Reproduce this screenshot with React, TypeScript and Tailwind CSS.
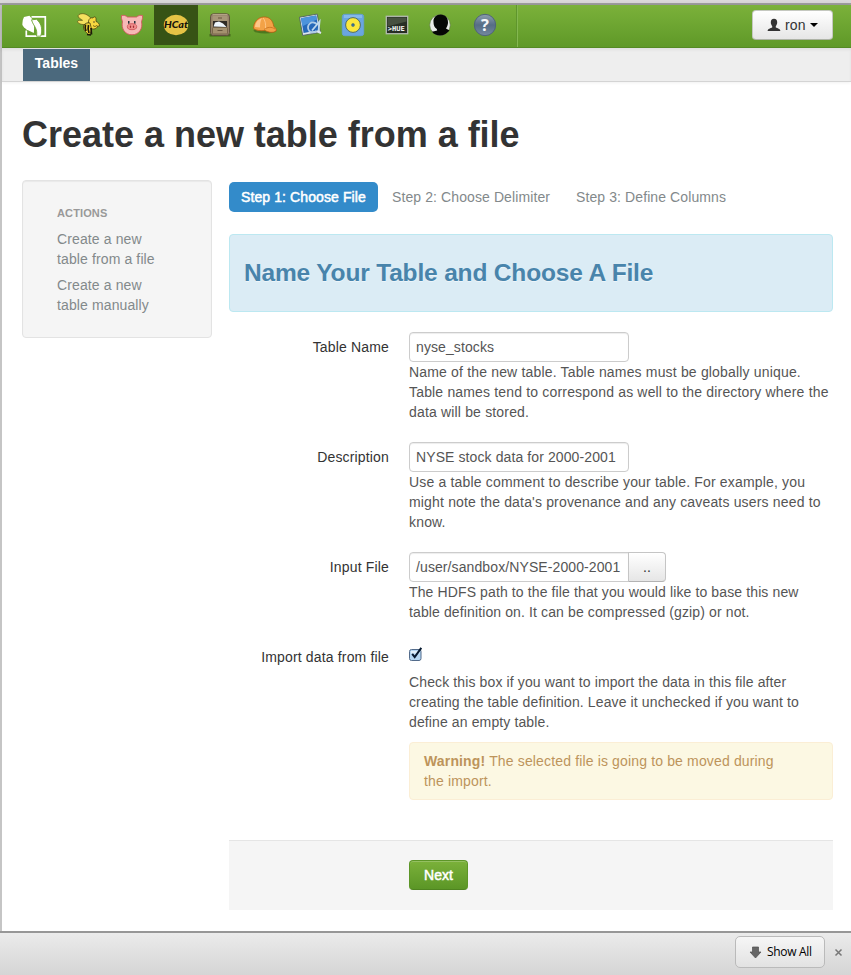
import React from "react";

function HueLogo() {
  return (
    <svg width="26" height="26" viewBox="0 0 26 26">
      <path d="M9.500 3.800h13.800v19.400H4.300V17.500" fill="none" stroke="#fff" strokeWidth="1.700" />
      <path d="M.8 7 2 4 7.500 2.800 10.500 6.500c1.500 3 2 7 1.300 13.500L4.500 16.500C2.500 15 1 13.500.3 11.500z" fill="#fff" />
      <path d="M9.500 6.800l5-.5c2.500 2 4.500 5 5 8.500.4 3 .2 5.500-.8 8.400h-4.200c.6-3 .3-6-1.200-8.700-1-2-2.800-4.200-3.800-7.700z" fill="#fff" stroke="#6da533" strokeWidth=".9" />
    </svg>
  );
}

function BeeIcon() {
  return (
    <svg width="26" height="26" viewBox="0 0 26 26">
      <path d="M11 12.500c-4 .5-8.500-1-8.500-3 .5-1.500 3-1 5-1.200C5 6.800 1.500 4.500 4 2.500 8 .5 13 2 17 7.500z" fill="#f6e05e" stroke="#5d5215" strokeWidth=".7" />
      <path d="M13.500 9c.5-2.500 2.500-3.800 4.500-3 1-1.800 3-1.200 3 .6L21 9.500c2 .5 3.500 2.500 3.500 4 0 1-1 1-1.500.2-.8 2-2 3.300-4.500 3.300-3 0-5.500-3-5-8z" fill="#f7d840" stroke="#3c340c" strokeWidth=".7" />
      <path d="M15 11c-3-.5-6.500.5-6.500 4 0 2.500 1.500 4.500 5.500 8 1.500-2 3-4 2.500-6z" fill="#f4d63a" stroke="#2b2508" strokeWidth=".7" />
      <path d="M10.500 12.500c-.5 2-.5 4 .5 6.500M13.500 13c-.7 2.500-.5 5 .5 8M16 16l.5 6.500M12 22.500l4 .5" stroke="#1d1a0a" strokeWidth="1.700" fill="none" />
      <circle cx="19" cy="10" r=".7" fill="#222" />
      <path d="M18 13.500c1.500 1.500 3 1 4-.3" stroke="#5b4b00" strokeWidth=".8" fill="none" />
    </svg>
  );
}

function PigIcon() {
  return (
    <svg width="24" height="24" viewBox="0 0 24 24">
      <path d="M1.500 2.500c2-.5 4.500 0 6 1.500h9c1.500-1.500 4-2 6-1.500.3 2.200-.2 4.200-1 6 1.700 7-2.500 13.300-9.500 13.300S.8 15.500 2.500 8.500c-.8-1.800-1.300-3.800-1-6z" fill="#f6b9b6" stroke="#d0565a" strokeWidth=".9" />
      <rect x="8" y="8" width="1.500" height="2.700" fill="#26343d" />
      <rect x="14" y="8" width="1.500" height="2.700" fill="#26343d" />
      <ellipse cx="12" cy="13.700" rx="4.700" ry="3" fill="#f08f8c" stroke="#cb5056" strokeWidth=".8" />
      <ellipse cx="10.500" cy="13.700" rx=".7" ry="1.300" fill="#a52f35" />
      <ellipse cx="13.500" cy="13.700" rx=".7" ry="1.300" fill="#a52f35" />
    </svg>
  );
}

function HCatIcon() {
  return (
    <svg width="28" height="24" viewBox="0 0 28 24">
      <ellipse cx="14" cy="12" rx="12.200" ry="10.200" fill="#e5c345" />
      <text x="14" y="15.200" textAnchor="middle" textLength="24" lengthAdjust="spacingAndGlyphs" fontFamily="Lato, sans-serif" fontSize="9.800" fontWeight="900" fontStyle="italic" fill="#15130a">HCat</text>
    </svg>
  );
}

function CabinetIcon() {
  return (
    <svg width="24" height="26" viewBox="0 0 24 26">
      <path d="M1.500 22h21v2.500h-21z" fill="#2d4512" opacity=".6" />
      <rect x="2.500" y="1.800" width="19" height="21.700" rx="3" fill="#95836a" stroke="#5d4e3b" strokeWidth=".9" />
      <path d="M4.500 2.700h15" stroke="#bfae91" />
      <rect x="4.500" y="4" width="15" height="6" rx="1" fill="#a79678" />
      <path d="M5 9h14v6.500H5z" fill="#302b26" />
      <path d="M5.500 14.500 7 10.500l4-1 4 2 3.500 3.500z" fill="#eef5fb" />
      <rect x="4.500" y="15.500" width="15" height="6.500" rx="1" fill="#a4916f" stroke="#6b583e" strokeWidth=".7" />
      <path d="M9.500 18.500h5M10 6h4" stroke="#66553d" strokeWidth="1" />
    </svg>
  );
}

function HelmetIcon() {
  return (
    <svg width="28" height="22" viewBox="0 0 28 22">
      <ellipse cx="14" cy="16.500" rx="11.500" ry="3" fill="#355414" opacity=".55" />
      <path d="M2.500 14.500c0-5.500 3.500-11 10-11.500 6-.5 9.500 3.500 10.300 9.500 1.700 1 2.700 2.500 2.300 4.500-3.200 2.300-7.800 1.300-11.100-.5-4 .5-9 .2-11.500-2z" fill="#f3a247" stroke="#b76011" strokeWidth=".8" />
      <path d="M4 13C4.500 8.500 7 5.500 11 4.300c-1.500 2.200-2 5.200-2 9.200z" fill="#ffc78a" />
      <path d="M12 4c2 2 3 5.500 2.500 11" fill="none" stroke="#ffc78a" strokeWidth=".9" />
      <path d="M13 15.500c3.500-2.500 7.500-3 11-.5" stroke="#cc7420" strokeWidth=".9" fill="none" />
    </svg>
  );
}

function PhotoIcon() {
  return (
    <svg width="26" height="26" viewBox="0 0 26 26">
      <g transform="rotate(-10 13 13)">
        <rect x="4" y="3.500" width="18" height="18.500" fill="#dce5ed" stroke="#4b5b61" strokeWidth=".8" />
        <rect x="5.300" y="4.800" width="15.400" height="15" fill="#2668b9" />
        <path d="M5.300 4.800h15.400v4L5.300 13z" fill="#4c93dc" />
      </g>
      <path d="M20 12.500a5 5 0 1 0-.5 6.500" fill="none" stroke="#aecce8" strokeWidth="1.800" />
      <path d="m15 18.500 7.500-9-1 10" fill="none" stroke="#c0d8ed" strokeWidth="1.800" />
      <path d="m20.500 19.500 3.500 1.500" stroke="#dce7f0" strokeWidth="2" />
    </svg>
  );
}

function DiscIcon() {
  return (
    <svg width="24" height="24" viewBox="0 0 24 24">
      <rect x="1.300" y="1.300" width="21.400" height="21.400" rx="2.500" fill="#6aa5e1" stroke="#65a1cf" />
      <path d="M3 2h18v3H3z" fill="#84b8ec" />
      <circle cx="12" cy="12" r="7.400" fill="#fae73c" stroke="#4f6c66" />
      <circle cx="12" cy="12" r="1.700" fill="#205780" />
      <circle cx="12" cy="12" r=".6" fill="#8bbad6" />
    </svg>
  );
}

function ShellIcon() {
  return (
    <svg width="24" height="20" viewBox="0 0 24 20">
      <rect x="1.300" y="1.300" width="21.400" height="17.400" fill="#272e25" stroke="#b3b9b1" strokeWidth="1.300" />
      <path d="M2.500 2.500h19v4l-19 5z" fill="#465040" />
      <text x="2.800" y="16.300" textLength="17" lengthAdjust="spacingAndGlyphs" fontFamily="DejaVu Sans Mono, monospace" fontWeight="700" fontSize="7" fill="#f6f9f5">&gt;HUE</text>
    </svg>
  );
}

function ProfileIcon() {
  return (
    <svg width="24" height="24" viewBox="0 0 24 24">
      <circle cx="12" cy="12" r="10.300" fill="#e8ebe8" stroke="#60764a" strokeWidth=".6" />
      <path d="M5.500 9C5 4.500 8.500 1.500 12.500 1.500 17.500 1.500 20.300 5 20 10c-.2 2-1 4-2 5.500l3.500 2C19 20.500 15.500 22.500 12 22.500c-3.500 0-6-1.200-8-3.700l5.200-1.300-.4-1.500C6.500 14.500 5.500 12.500 5.500 9z" fill="#050705" />
    </svg>
  );
}

function HelpIcon() {
  return (
    <svg width="24" height="24" viewBox="0 0 24 24">
      <defs>
        <linearGradient id="help-ball" x2="0" y2="1">
          <stop stopColor="#8e9faf" />
          <stop offset=".5" stopColor="#566d85" />
          <stop offset="1" stopColor="#7489a0" />
        </linearGradient>
      </defs>
      <circle cx="12" cy="12" r="10.700" fill="url(#help-ball)" stroke="#4e6377" />
      <text x="12" y="17.600" textAnchor="middle" fontFamily="Open Sans, sans-serif" fontWeight="700" fontSize="16.500" fill="#f6f8fa">?</text>
    </svg>
  );
}

const apps = [
  { Icon: BeeIcon },
  { Icon: PigIcon },
  { Icon: HCatIcon, active: true },
  { Icon: CabinetIcon },
  { Icon: HelmetIcon, shift: "pl-px" },
  { Icon: PhotoIcon, shift: "pl-[3px]" },
  { Icon: DiscIcon, shift: "pl-px" },
  { Icon: ShellIcon, shift: "pl-[2px]" },
  { Icon: ProfileIcon },
  { Icon: HelpIcon, shift: "pl-px" },
];

function Navbar() {
  return (
    <nav className="flex h-[43px] border-b border-[#558c25] bg-linear-to-b from-[#7bb13a] to-[#5f9928] shadow-[0_1px_5px_rgba(0,0,0,0.2)]">
      <div className="flex w-16 items-center pl-5">
        <HueLogo />
      </div>
      {apps.map(({ Icon, active, shift }, i) => (
        <div key={i} className={`flex h-10 w-11 items-center justify-center ${active ? "bg-[#375315]" : ""} ${shift ?? ""}`}>
          <Icon />
        </div>
      ))}
      <div className="ml-[10px] w-0.5 border-r border-[#84b850] border-l border-l-[#5f952c]" />
      <button className="mt-[5px] mr-[18px] ml-auto flex h-[30px] w-[81px] items-center rounded border border-[#c5c8c0] border-b-[#aeb3a6] bg-linear-to-b from-white to-[#e6e6e6] pl-[14px] text-sm text-[#333]">
        <svg width="14" height="14" viewBox="0 0 14 14" className="mr-[4px]">
          <path d="M7 .8c2.200 0 3.300 1.500 3.200 3.700-.1 1.700-.7 2.800-1.400 3.500v1.500c1.500.8 4.400 1.200 4.600 3.500H.6c.2-2.300 3.100-2.700 4.600-3.500V8C4.500 7.300 3.900 6.200 3.800 4.500 3.700 2.300 4.800.8 7 .8z" fill="#333" />
        </svg>
        <span className="leading-5 tracking-[0.2px]">ron</span>
        <span className="ml-1 border-x-4 border-t-4 border-x-transparent border-t-black" />
      </button>
    </nav>
  );
}

function Lines({ items }: { items: string[] }) {
  return (
    <>
      {items.map((line) => (
        <span key={line} className="block whitespace-nowrap">{line}</span>
      ))}
    </>
  );
}

function Field({ label, help, wide = false, children }: { label: string; help: string[]; wide?: boolean; children: React.ReactNode }) {
  return (
    <div className="mb-5 flex">
      <label className="w-40 pt-[5px] text-right tracking-[0.16px] text-[#333]">{label}</label>
      <div className="ml-5 w-[424px]">
        <div className="flex h-[30px]">{children}</div>
        <p className={`text-[#555] ${wide ? "tracking-[0.17px]" : "tracking-[0.12px]"}`}><Lines items={help} /></p>
      </div>
    </div>
  );
}

function TextBox({ value, joined = false }: { value: string; joined?: boolean }) {
  return (
    <div className={`h-[30px] w-[220px] overflow-hidden border border-[#ccc] bg-white px-1.5 py-1 tracking-[0.1px] whitespace-nowrap text-[#555] shadow-[inset_0_1px_1px_rgba(0,0,0,0.075)] ${joined ? "rounded-l" : "rounded"}`}>
      {value}
    </div>
  );
}

export default function App() {
  return (
    <div className="flex h-[975px] w-[851px] flex-col overflow-hidden bg-white font-['Liberation_Sans',Arial,sans-serif] text-sm leading-5">
      <div className="h-[5px] shrink-0 border-b-2 border-[#a09fa0] bg-[#dad8d9]" />
      <div className="h-[926px] border-l-2 border-[#c5c5c5]">
        <Navbar />
        <div className="flex h-[34px] border-b border-[#d4d4d4] bg-[#eee] pl-[21px] shadow-[inset_0_2px_3px_rgba(0,0,0,0.06),0_1px_3px_rgba(0,0,0,0.06)]">
          <div className="mt-px h-8 w-[67px] bg-[#4b697d] pt-1 text-center font-bold text-white">Tables</div>
        </div>
        <main className="px-5 pt-[33px]">
          <h1 className="h-10 text-[36px] leading-10 font-bold tracking-[-0.02px] whitespace-nowrap text-[#333]">Create a new table from a file</h1>
          <div className="mt-[25px] flex gap-[17px]">
            <aside className="h-[158px] w-[190px] shrink-0 rounded border border-[#e3e3e3] bg-[#f5f5f5] pt-[22px] pl-[34px] tracking-[0.12px] text-[#83898b] shadow-[inset_0_1px_1px_rgba(0,0,0,0.05)]">
              <div className="mb-[6px] text-[11px] font-bold text-[#999]">ACTIONS</div>
              <div className="mb-[6px]"><Lines items={["Create a new", "table from a file"]} /></div>
              <div><Lines items={["Create a new", "table manually"]} /></div>
            </aside>
            <div className="w-[604px] shrink-0 pt-0.5">
              <div className="flex h-[30px] gap-0.5 tracking-[0.1px] text-[#83898b]">
                <div className="w-[149px] rounded-[5px] bg-[#338bca] px-3 py-[5px] whitespace-nowrap text-white [-webkit-text-stroke:0.5px_white]">Step 1: Choose File</div>
                <div className="w-[182px] px-3 py-[5px] whitespace-nowrap">Step 2: Choose Delimiter</div>
                <div className="px-3 py-[5px] whitespace-nowrap">Step 3: Define Columns</div>
              </div>
              <div className="mt-[22px] mb-5 h-[78px] rounded border border-[#bce8f1] bg-[#dbecf5] pt-[18px] pl-[14px]">
                <h2 className="text-[24.5px] leading-10 font-bold tracking-[-0.17px] whitespace-nowrap text-[#4884ab] [text-shadow:0_1px_0_rgba(255,255,255,0.5)]">Name Your Table and Choose A File</h2>
              </div>
              <Field wide label="Table Name" help={["Name of the new table. Table names must be globally unique.", "Table names tend to correspond as well to the directory where the", "data will be stored."]}>
                <TextBox value="nyse_stocks" />
              </Field>
              <Field wide label="Description" help={["Use a table comment to describe your table. For example, you", "might note the data's provenance and any caveats users need to", "know."]}>
                <TextBox value="NYSE stock data for 2000-2001" />
              </Field>
              <Field label="Input File" help={["The HDFS path to the file that you would like to base this new", "table definition on. It can be compressed (gzip) or not."]}>
                <TextBox value="/user/sandbox/NYSE-2000-2001" joined />
                <div className="-ml-px h-[30px] w-[38px] rounded-r border border-[#c5c5c5] border-b-[#b3b3b3] bg-linear-to-b from-white to-[#e6e6e6] py-1 text-center text-[#333]">..</div>
              </Field>
              <Field label="Import data from file" help={["Check this box if you want to import the data in this file after", "creating the table definition. Leave it unchecked if you want to", "define an empty table."]}>
                <svg width="16" height="16" viewBox="0 0 16 16" className="mt-1">
                  <rect x=".5" y="3.500" width="11.500" height="11" rx="2" fill="#b4d7f3" stroke="#536b8b" />
                  <path d="M2 5h8.500v2.500H2z" fill="#e1f0fb" />
                  <path d="M3.200 7.800 5.700 11 12.300 1.800" fill="none" stroke="#071a30" strokeWidth="2" />
                </svg>
              </Field>
              <div className="-mt-2.5 ml-[180px] h-[58px] rounded border border-[#fbeed5] bg-[#fcf8e3] py-2 pl-[14px] tracking-[0.15px] text-[#bd945b]">
                <div className="whitespace-nowrap"><b>Warning!</b> The selected file is going to be moved during</div>
                <div>the import.</div>
              </div>
              <div className="mt-10 h-[70px] border-t border-[#e5e5e5] bg-[#f5f5f5] pt-[19px] pl-[180px]">
                <button className="h-[30px] w-[59px] rounded border border-[#5d9628] border-b-[#4f8420] bg-linear-to-b from-[#7bb13a] to-[#5b9626] text-sm text-white shadow-[inset_0_1px_0_rgba(255,255,255,0.2)] [-webkit-text-stroke:0.5px_white]">Next</button>
              </div>
            </div>
          </div>
        </main>
      </div>
      <footer className="flex h-11 shrink-0 items-start border-t-2 border-[#979797] bg-linear-to-b from-[#ebebeb] to-[#d5d5d5]">
        <button className="mt-[3px] ml-[735px] flex h-8 w-[90px] items-center rounded-[5px] border border-[#bababa] bg-linear-to-b from-[#f6f6f6] to-[#e2e2e2] pl-[13px] font-['Open_Sans',sans-serif] text-[12px] tracking-[-0.3px] text-black">
          <svg width="13" height="13" viewBox="0 0 13 13" className="mr-[5px]">
            <path d="M3.500 1h6v5H12L6.500 12 1 6h2.500z" fill="#666" stroke="#4f4f4f" strokeWidth=".7" />
          </svg>
          <span className="whitespace-nowrap">Show All</span>
        </button>
        <svg width="9" height="9" viewBox="0 0 9 9" className="mt-[15px] ml-[9px]">
          <path d="m1.500 1.500 6 6m0-6-6 6" stroke="#777" strokeWidth="1.500" />
        </svg>
      </footer>
    </div>
  );
}
